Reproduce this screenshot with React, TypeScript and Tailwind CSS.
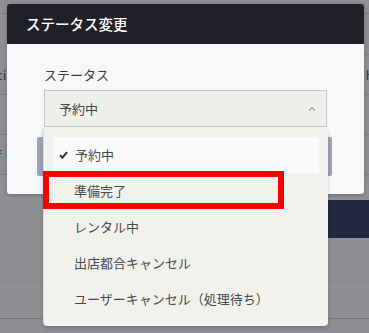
import React from "react";

const jp = "font-['Noto_Sans_CJK_JP','Noto_Sans',sans-serif]";

const items = ["予約中", "準備完了", "レンタル中", "出店都合キャンセル", "ユーザーキャンセル（処理待ち）"];

function Backdrop() {
  return (
    <div className="flex flex-col text-[13px] text-[#3b3c3f]">
      <div className="h-[14px] border-b border-[#7d7e81]" />
      <div className="flex h-[41px]">
        <div className="flex-1" />
        <div className="w-[120px] border-b border-[#7d7e81]" />
      </div>
      <div className="flex h-[40px] items-center justify-between border-b border-[#7d7e81]">
        <span className="-ml-[4px]">ci</span>
        <span className="-mr-[6px]">H</span>
      </div>
      <div className="h-[40px] border-b border-[#7d7e81]" />
      <div className="flex h-[40px] items-center border-b border-[#7d7e81]">
        <span className="-ml-[3px]">f</span>
      </div>
      <div className="h-[25px]" />
      <div className="flex h-[38px]">
        <div className="flex-1" />
        <div className="w-[180px] bg-[#232842]" />
      </div>
      <div className="h-[44px] border-b border-[#86878a]" />
      <div className="h-[37px] border-b border-[#77787b]" />
    </div>
  );
}

function Dialog() {
  return (
    <div className="absolute left-[7px] top-[4px] w-[357px] overflow-hidden rounded-[3px] shadow-[0_1px_4px_rgba(0,0,0,0.25)]">
      <div className="flex h-[40px] items-center bg-[#1f2028] px-[19px] text-[14.5px] font-medium text-white">
        ステータス変更
      </div>
      <div className="bg-[#f7f8fa] px-[37px] pt-[21px] pb-[18px]">
        <div className="text-[13px] leading-[19px] text-[#3a3a3a]">ステータス</div>
        <div className="mt-[6px] flex h-[37px] items-center justify-between border border-[#c7c7c4] bg-[#efefec] pl-[14px] pr-[10px] text-[13px] text-[#444]">
          <span>予約中</span>
          <svg width="8" height="5" viewBox="0 0 8 5" fill="none" stroke="#9a9a9a" strokeWidth="1.2">
            <path d="M1 4.5 4 1.5 7 4.5" />
          </svg>
        </div>
        <div className="mt-[10px] ml-[-7px] mr-[-5px] h-[39px] rounded-[2px] bg-[#9fa3b6]" />
      </div>
    </div>
  );
}

function Menu() {
  return (
    <div className="absolute left-[43px] top-[128px] w-[285px] rounded-b-[4px] border-l border-[#dcdcd8] bg-[#f1f2ee] px-[9px] pt-[9px] pb-[9px] shadow-[0_2px_4px_rgba(0,0,0,0.2)]">
      {items.map((t, i) => (
        <div
          key={t}
          className={
            "flex h-[36px] items-center text-[13px] text-[#4a4a4a] " +
            (i === 0 ? "bg-[#f8f9f9] pl-[6px]" : "pl-[21px]")
          }
        >
          {i === 0 && (
            <svg width="9" height="8" viewBox="0 0 9 8" className="mr-[7px]">
              <path d="M1 4.2 3.4 6.6 8 1.2" fill="none" stroke="#2e2e2e" strokeWidth="2" />
            </svg>
          )}
          {t}
        </div>
      ))}
    </div>
  );
}

export default function App() {
  return (
    <div className={"relative h-[333px] w-[369px] overflow-hidden bg-[#8f9093] " + jp}>
      <Backdrop />
      <Dialog />
      <Menu />
      <div className="absolute left-[43px] top-[171px] h-[38px] w-[241px] border-[6px] border-[#ff0000]" />
    </div>
  );
}
